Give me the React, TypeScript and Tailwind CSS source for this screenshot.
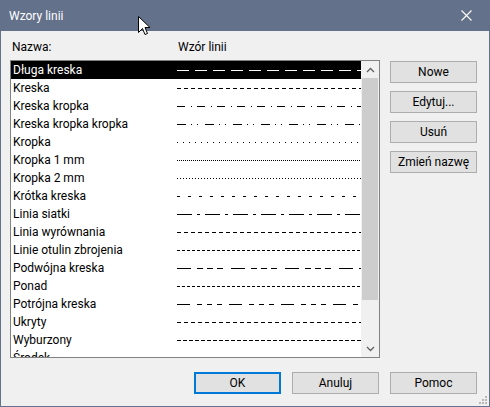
import React from 'react';

type Pattern = { name: string; dash: string };

const patterns: Pattern[] = [
  { name: 'Długa kreska', dash: '12 6' },
  { name: 'Kreska', dash: '4 3' },
  { name: 'Kreska kropka', dash: '8 6 1 5' },
  { name: 'Kreska kropka kropka', dash: '9 5 1 5 1 7' },
  { name: 'Kropka', dash: '1 5' },
  { name: 'Kropka 1 mm', dash: '1 1' },
  { name: 'Kropka 2 mm', dash: '1 2' },
  { name: 'Krótka kreska', dash: '3 8' },
  { name: 'Linia siatki', dash: '15 5 3 5' },
  { name: 'Linia wyrównania', dash: '4 3' },
  { name: 'Linie otulin zbrojenia', dash: '3 2' },
  { name: 'Podwójna kreska', dash: '14 6 6 4 6 4 6 8' },
  { name: 'Ponad', dash: '3 2' },
  { name: 'Potrójna kreska', dash: '13 7 5 5 5 5 5 7' },
  { name: 'Ukryty', dash: '4 3' },
  { name: 'Wyburzony', dash: '4 2' },
  { name: 'Środek', dash: '14 4 4 4' },
];

const font = { fontFamily: 'Roboto, "Noto Sans", sans-serif' };

function Button({ label, primary }: { label: string; primary?: boolean }) {
  return (
    <div
      className={
        primary
          ? 'flex h-[22px] w-[87px] items-center justify-center border-2 border-[#0078d7] bg-[#e1e1e1] text-[12px] text-black'
          : 'flex h-[22px] w-[87px] items-center justify-center border border-[#adadad] bg-[#e1e1e1] text-[12px] text-black'
      }
    >
      {label}
    </div>
  );
}

function PatternRow({ item, selected }: { item: Pattern; selected: boolean }) {
  return (
    <div className={selected ? 'flex h-[18px] shrink-0 items-center bg-black text-white' : 'flex h-[18px] shrink-0 items-center text-black'}>
      <div className="w-[166px] shrink-0 pl-[2px] text-[12px] leading-[18px]">{item.name}</div>
      <svg width="184" height="18" className="shrink-0" shapeRendering="crispEdges">
        <line x1="0" y1="9.5" x2="184" y2="9.5" stroke={selected ? '#fff' : '#000'} strokeWidth="1" strokeDasharray={item.dash} />
      </svg>
    </div>
  );
}

export default function App() {
  return (
    <div className="relative flex h-[407px] w-[490px] flex-col border border-[#64718b] bg-[#f0f0f0]" style={font}>
      <div className="flex h-[30px] shrink-0 items-center justify-between bg-[#64718b] pl-[8px] text-[12px] text-white">
        <span>Wzory linii</span>
        <svg width="46" height="30" viewBox="0 0 46 30">
          <path d="M18.5 9.5 L28.5 19.5 M28.5 9.5 L18.5 19.5" stroke="#fff" strokeWidth="1.1" fill="none" />
        </svg>
      </div>

      <div className="flex pl-[11px] pt-[8px] text-[12px] leading-[16px] text-black">
        <span className="w-[166px]">Nazwa:</span>
        <span>Wzór linii</span>
      </div>

      <div className="mt-[5px] flex pl-[9px]">
        <div className="flex h-[298px] w-[370px] border border-[#828282] bg-white">
          <div className="flex w-[350px] flex-col overflow-hidden">
            {patterns.map((p, i) => (
              <PatternRow key={p.name} item={p} selected={i === 0} />
            ))}
          </div>
          <div className="flex w-[18px] flex-col bg-[#f0f0f0]">
            <div className="flex h-[17px] items-center justify-center">
              <svg width="9" height="6" viewBox="0 0 9 6">
                <path d="M1 5 L4.5 1.5 L8 5" stroke="#606060" strokeWidth="1.3" fill="none" />
              </svg>
            </div>
            <div className="mx-[1px] h-[222px] bg-[#cdcdcd]" />
            <div className="flex-1" />
            <div className="flex h-[17px] items-center justify-center">
              <svg width="9" height="6" viewBox="0 0 9 6">
                <path d="M1 1 L4.5 4.5 L8 1" stroke="#606060" strokeWidth="1.3" fill="none" />
              </svg>
            </div>
          </div>
        </div>
        <div className="ml-[10px] mt-[1px] flex flex-col gap-[8px]">
          <Button label="Nowe" />
          <Button label="Edytuj..." />
          <Button label="Usuń" />
          <Button label="Zmień nazwę" />
        </div>
      </div>

      <div className="mt-[14px] flex justify-end gap-[11px] pr-[12px]">
        <Button label="OK" primary />
        <Button label="Anuluj" />
        <Button label="Pomoc" />
      </div>

      <svg className="absolute bottom-[1px] right-[1px]" width="10" height="10" viewBox="0 0 10 10">
        <rect x="7" y="1" width="2" height="2" fill="#b8b8b8" />
        <rect x="4" y="4" width="2" height="2" fill="#b8b8b8" />
        <rect x="7" y="4" width="2" height="2" fill="#b8b8b8" />
        <rect x="1" y="7" width="2" height="2" fill="#b8b8b8" />
        <rect x="4" y="7" width="2" height="2" fill="#b8b8b8" />
        <rect x="7" y="7" width="2" height="2" fill="#b8b8b8" />
      </svg>

      <svg className="absolute left-[137px] top-[15px]" width="13" height="20" viewBox="0 0 13 20">
        <path d="M0.5 0.5 L0.5 16.5 L4.5 12.5 L7 18.5 L9.5 17.5 L7 11.5 L12 11.5 Z" fill="#fff" stroke="#000" strokeWidth="1" strokeLinejoin="miter" />
      </svg>
    </div>
  );
}
